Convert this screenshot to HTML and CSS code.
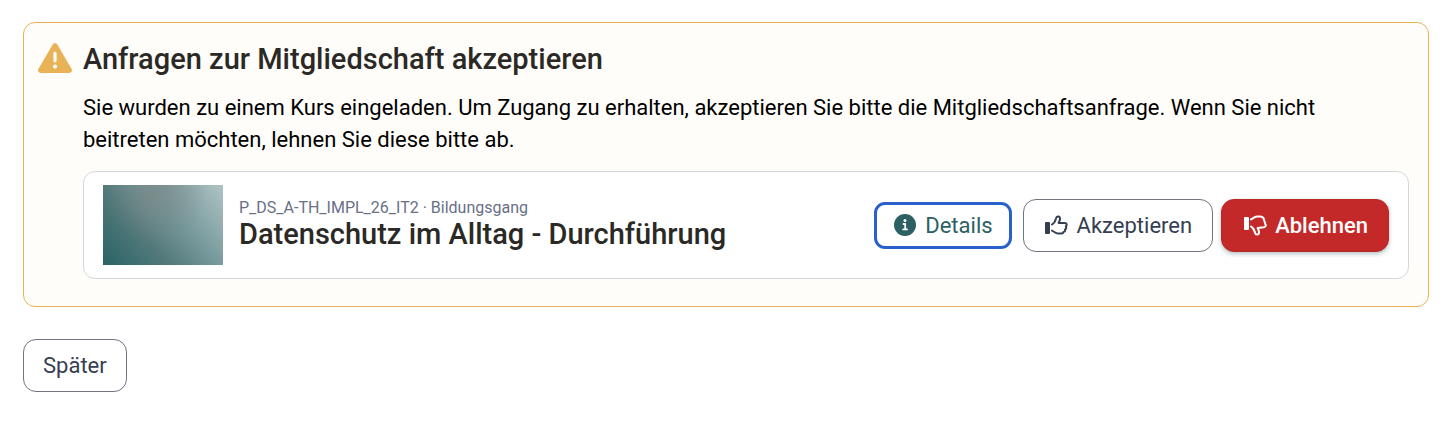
FILE: index.html
```html
<!DOCTYPE html>
<html lang="de">
<head>
<meta charset="UTF-8">
<meta name="viewport" content="width=device-width, initial-scale=1.0">
<title>Anfragen zur Mitgliedschaft akzeptieren</title>
<link rel="stylesheet" href="styles.css">
</head>
<body>

<section class="alert">
  <svg class="alert-icon" viewBox="0 0 512 512" aria-hidden="true">
    <path fill="currentColor" d="M256 32c14.200 0 27.300 7.500 34.500 19.800l216 368c7.300 12.400 7.300 27.700 .2 40.100S486.300 480 472 480H40c-14.300 0-27.600-7.700-34.700-20.100s-7-27.800 .2-40.100l216-368C228.700 39.500 241.800 32 256 32zm0 128c-13.300 0-24 10.700-24 24v112c0 13.300 10.700 24 24 24s24-10.700 24-24V184c0-13.300-10.700-24-24-24zm32 224a32 32 0 1 0-64 0a32 32 0 1 0 64 0z"/>
  </svg>
  <div class="alert-content">
    <h1>Anfragen zur Mitgliedschaft akzeptieren</h1>
    <p class="alert-text">Sie wurden zu einem Kurs eingeladen. Um Zugang zu erhalten, akzeptieren Sie bitte die Mitgliedschaftsanfrage. Wenn Sie nicht beitreten möchten, lehnen Sie diese bitte ab.</p>

    <article class="course">
      <div class="course-image"></div>
      <div class="course-info">
        <div class="course-meta">P_DS_A-TH_IMPL_26_IT2 · Bildungsgang</div>
        <h2>Datenschutz im Alltag - Durchführung</h2>
      </div>
      <div class="course-actions">
        <a class="btn btn-details" href="#details">
          <svg class="btn-icon" viewBox="0 0 24 24" aria-hidden="true">
            <circle cx="12" cy="11" r="11" fill="currentColor"/>
            <circle cx="12" cy="6.500" r="1.500" fill="#fff"/>
            <path d="M10.500 10h1.700v5.200M10.200 15.400h3.800" fill="none" stroke="#fff" stroke-width="1.800" stroke-linecap="round" stroke-linejoin="round"/>
          </svg>
          Details
        </a>
        <button type="button" class="btn btn-default btn-with-icon">
          <svg class="btn-icon" viewBox="0 0 24 24" aria-hidden="true">
            <rect x="0" y="8" width="5" height="12" rx="1" fill="currentColor"/>
            <path d="M7 10.500C9.500 9 10.400 7.200 11 4.400C11.500 1.600 15.400 1.900 15 5C14.800 6.600 14.300 7.700 13.600 8.900H19.700C22 8.900 22.300 11.300 20.800 12.300C21.800 13.600 21.200 15 20 15.400C20.400 16.900 19.700 17.800 18.500 18C18.300 19 17.700 19.500 16.600 19.500H13C10.400 19.500 9.600 17.800 7 16.600" fill="none" stroke="currentColor" stroke-width="2" stroke-linecap="round" stroke-linejoin="round"/>
          </svg>
          Akzeptieren
        </button>
        <button type="button" class="btn btn-danger btn-with-icon">
          <svg class="btn-icon" viewBox="0 0 24 24" aria-hidden="true">
            <rect x="1" y="3" width="5" height="13" rx="1" fill="currentColor"/>
            <path d="M8 12.500C10.500 14 11.400 15.800 12 18.600C12.500 21.400 16.400 21.100 16 18C15.800 16.400 15.300 15.300 14.600 14.100L20.700 13.300C23 12.800 23.200 11 22.200 9.800L21 5.500C20.600 3.500 19.500 2.700 17.600 2.500H14C11.400 2.600 10.600 4 8 5.400" fill="none" stroke="currentColor" stroke-width="2" stroke-linecap="round" stroke-linejoin="round"/>
          </svg>
          Ablehnen
        </button>
      </div>
    </article>
  </div>
</section>

<button type="button" class="btn btn-default">Später</button>

</body>
</html>
```

FILE: styles.css
```css
* {
  box-sizing: border-box;
}
body {
  margin: 22px 21px 22px 23px;
  background-color: #fff;
  color: #000;
  font-family: Roboto, "Liberation Sans", sans-serif;
  font-size: 22px;
  line-height: 32px;
}
h1, h2 {
  margin: 0;
  color: #2b2926;
  font-size: 29px;
  font-weight: 500;
}
h1 {
  line-height: 38px;
}
h2 {
  line-height: 32px;
}

.alert {
  display: flex;
  align-items: flex-start;
  gap: 11px;
  margin-bottom: 32px;
  padding: 17px 19px 27px 14px;
  border: 1px solid #e8b256;
  border-radius: 12px;
  background-color: #fffdf9;
}
.alert-icon {
  flex: none;
  width: 34px;
  height: 34px;
  margin-top: 1px;
  color: #e8b256;
}
.alert-content {
  flex: 1;
  min-width: 0;
}
.alert-text {
  margin: 14px 0 15px;
  padding-right: 20px;
}

.course {
  display: flex;
  align-items: center;
  gap: 16px;
  padding: 13px 19px;
  border: 1px solid #d3d6dc;
  border-radius: 12px;
  background-color: #fff;
}
.course-image {
  flex: none;
  width: 120px;
  height: 80px;
  background:
    radial-gradient(ellipse at 45% 0, rgba(125, 134, 134, 0.7), rgba(125, 134, 134, 0) 55%),
    linear-gradient(50deg, #2a6366, #547a7b 36%, #7a9c9e 64%, #b0c3c5);
}
.course-info {
  flex: 1;
  padding-bottom: 2px;
}
.course-meta {
  color: #697086;
  font-size: 16px;
  line-height: 20px;
}
.course-actions {
  display: flex;
  align-items: center;
  gap: 8px;
}

.btn {
  display: inline-flex;
  align-items: center;
  gap: 8px;
  padding: 10px 19px 9px;
  border: 1px solid #6f7480;
  border-radius: 13px;
  background-color: #fff;
  color: #363e52;
  font-family: inherit;
  font-size: 22px;
  line-height: 32px;
  text-decoration: none;
  white-space: nowrap;
  cursor: pointer;
}
.btn-with-icon {
  padding-right: 20px;
  padding-left: 21px;
}
.btn-icon {
  width: 24px;
  height: 24px;
}
.btn-details {
  margin-right: 3px;
  padding: 5px 16px 4px;
  border: 3px solid #2960cc;
  border-radius: 11px;
  color: #2c6063;
}
.btn-danger {
  border-color: #b92727;
  background-color: #c32929;
  color: #fff;
  font-weight: 500;
  box-shadow: 0 2px 4px rgba(40, 80, 90, 0.35);
}
```
